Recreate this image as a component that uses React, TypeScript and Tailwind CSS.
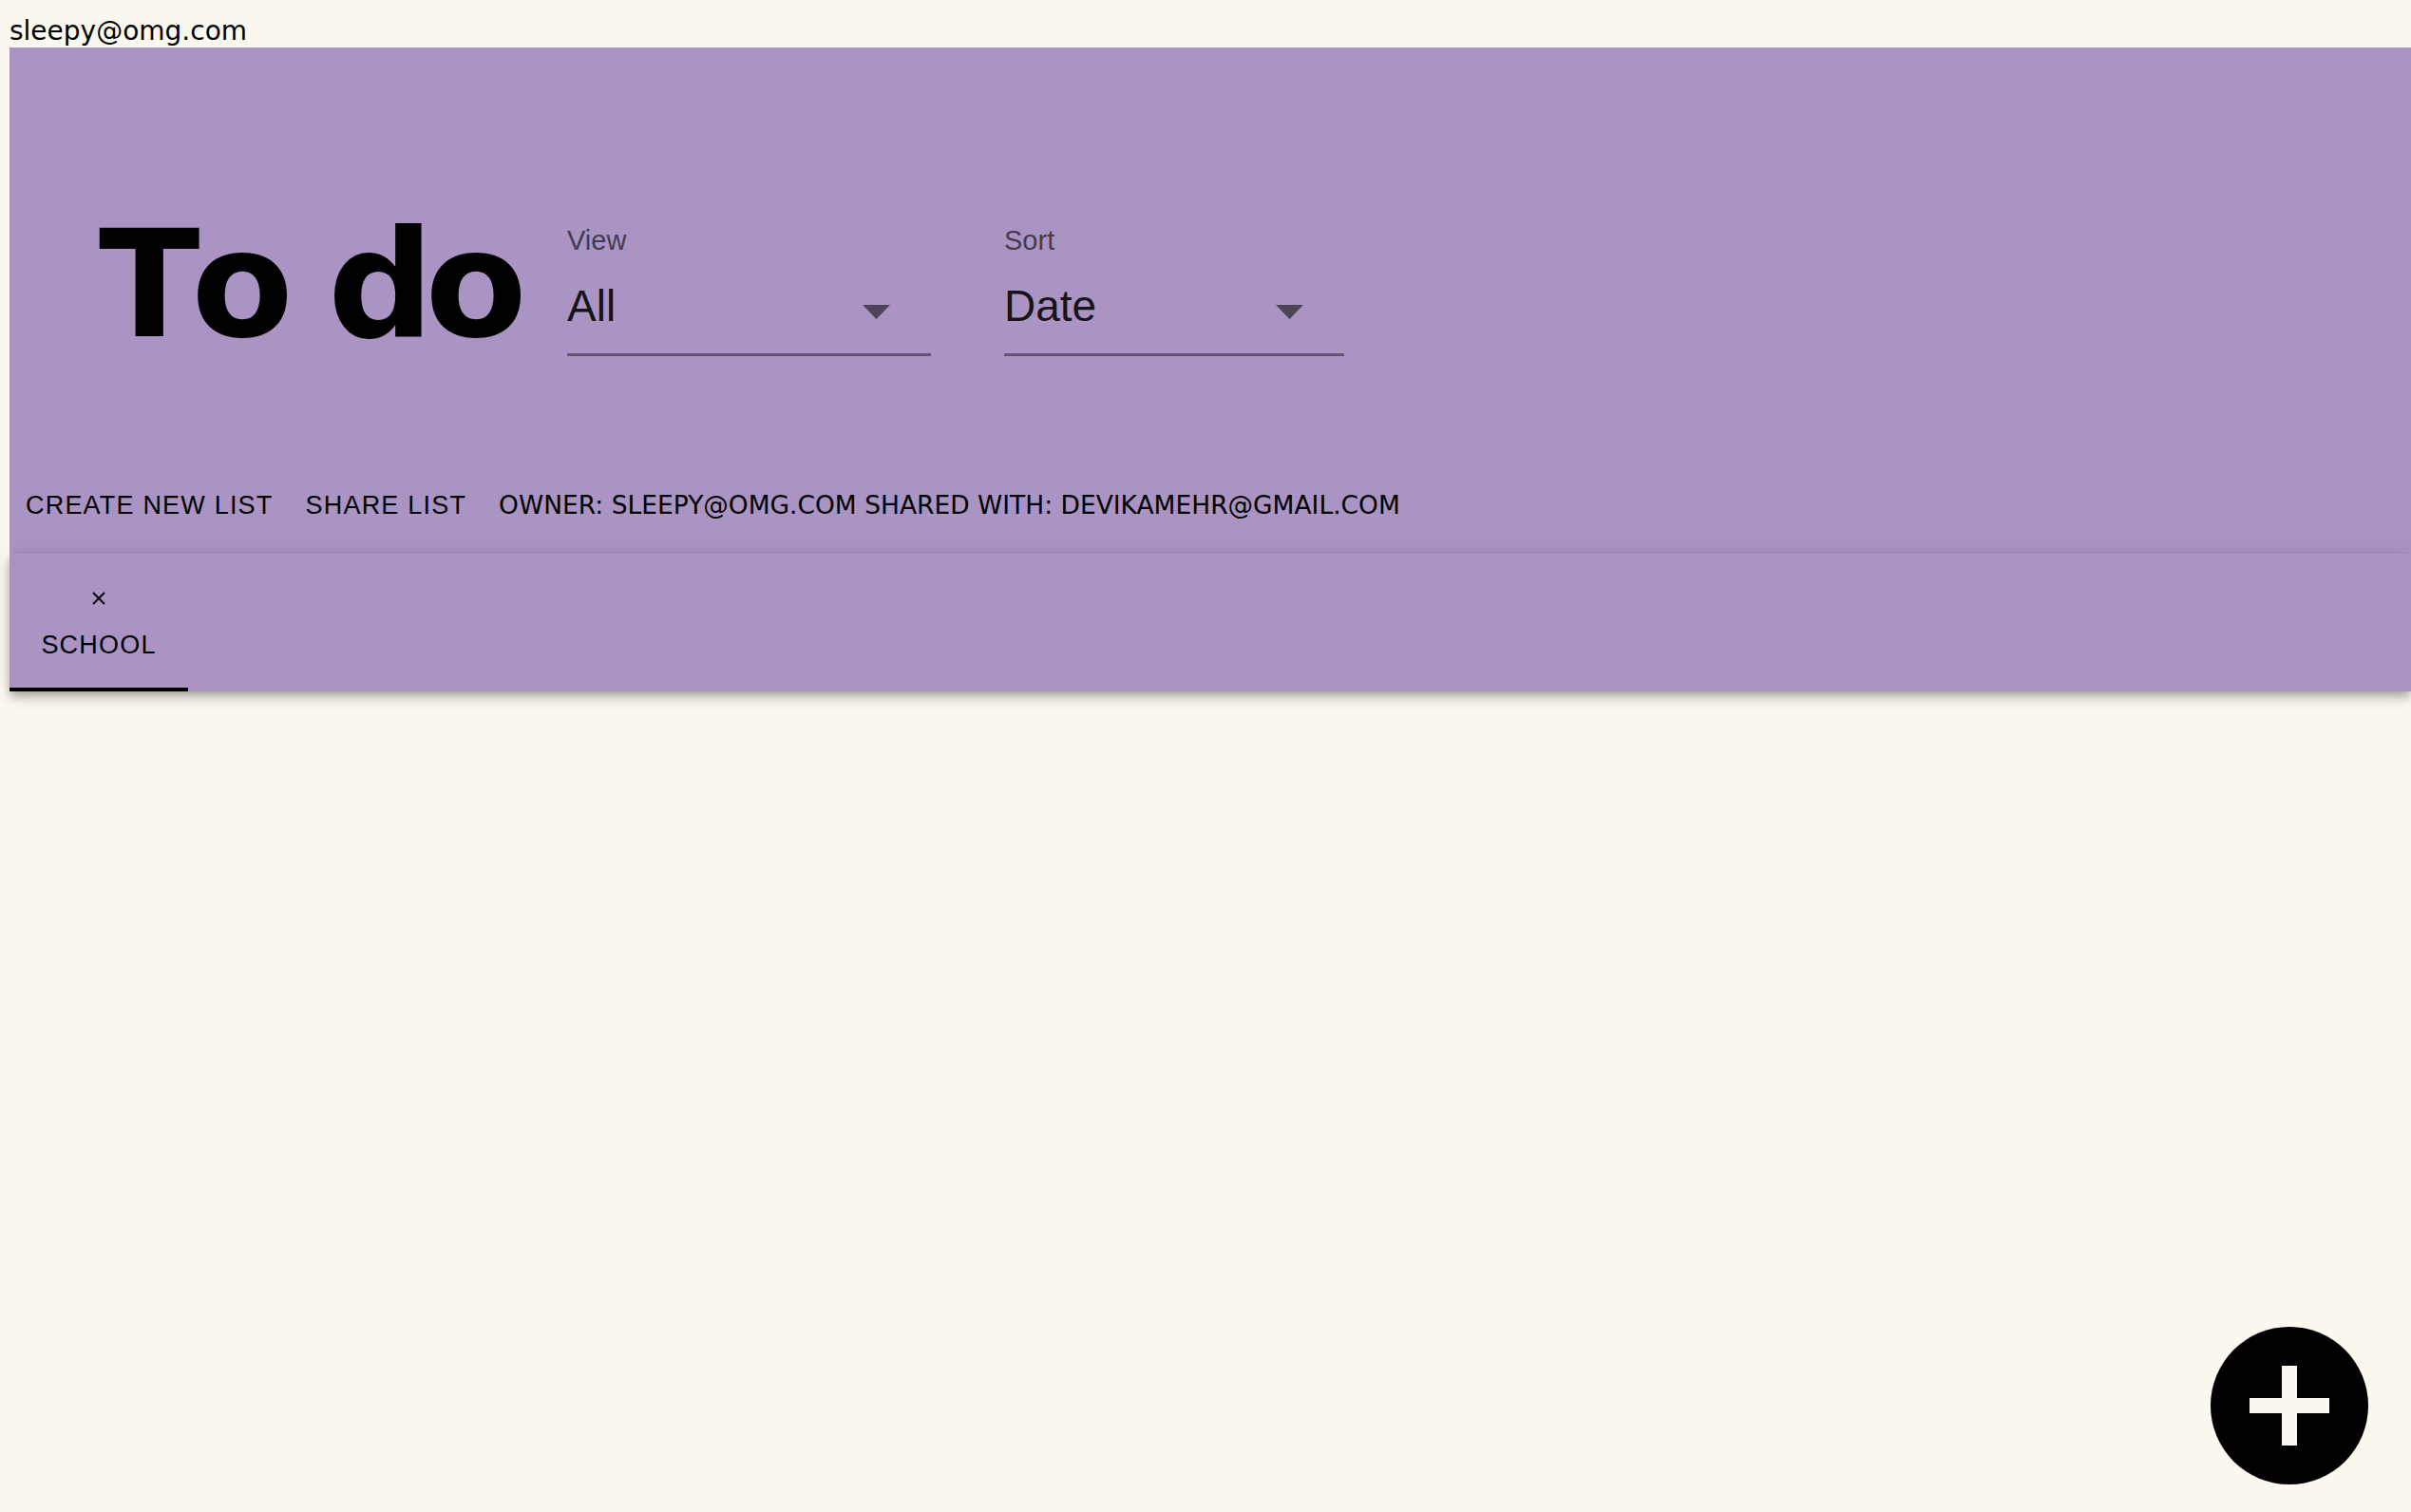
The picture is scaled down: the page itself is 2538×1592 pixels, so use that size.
import React from "react";

function Select({ label, value, width }: { label: string; value: string; width: string }) {
  return (
    <div className={`flex flex-col ${width}`}>
      <div className="mt-[17px] text-[29px] leading-[32px] text-[#443c4e] font-['Liberation_Sans',Arial,sans-serif]">{label}</div>
      <div className="mt-[27px] flex items-start justify-between border-b-[3px] border-[#635672] pb-[24px]">
        <span className="text-[46px] leading-[52px] text-[#161319] font-['Liberation_Sans',Arial,sans-serif]">{value}</span>
        <svg width="29" height="15" viewBox="0 0 29 15" className="mt-[25px] mr-[43px]">
          <polygon points="0,0 29,0 14.5,15" fill="#4e445a" />
        </svg>
      </div>
    </div>
  );
}

export default function App() {
  return (
    <div className="min-h-screen bg-[#fbf8f0] text-black">
      <div className="h-[50px] pl-[10px] pt-[15px] text-[28px] leading-[35px] font-['DejaVu_Sans',Verdana,sans-serif]">
        sleepy@omg.com
      </div>
      <div className="ml-[10px] bg-[#aa94c4]">
        <div className="flex h-[533px] flex-col justify-between">
          <div className="flex items-start pl-[94px] pt-[170px]">
            <h1 className="w-[493px] text-[156px] leading-[160px] font-bold tracking-[-9px] [font-kerning:none] font-['DejaVu_Sans',Verdana,sans-serif]">
              To do
            </h1>
            <Select label="View" value="All" width="w-[383px]" />
            <div className="w-[77px]" />
            <Select label="Sort" value="Date" width="w-[358px]" />
          </div>
          <div className="flex items-baseline pb-[35px]">
            <span className="px-[17px] text-[27px] leading-[32px] tracking-[1.2px] font-['Liberation_Sans',Arial,sans-serif]">
              CREATE NEW LIST
            </span>
            <span className="px-[17px] text-[27px] leading-[32px] tracking-[1.2px] font-['Liberation_Sans',Arial,sans-serif]">
              SHARE LIST
            </span>
            <span className="pl-[17px] text-[26.5px] leading-[32px] font-['DejaVu_Sans',Verdana,sans-serif]">
              OWNER: SLEEPY@OMG.COM SHARED WITH: DEVIKAMEHR@GMAIL.COM
            </span>
          </div>
        </div>
        <div className="relative z-10 flex h-[145px] bg-[#aa94c4] shadow-[0_4px_8px_-2px_rgba(0,0,0,0.2),0_8px_10px_0_rgba(0,0,0,0.14),0_2px_20px_0_rgba(0,0,0,0.12)]">
          <div className="flex w-[188px] flex-col items-center">
            <svg width="14" height="14" viewBox="0 0 14 14" className="mt-[40px]">
              <line x1="1" y1="1" x2="13" y2="13" stroke="#000" strokeWidth="1.8" />
              <line x1="13" y1="1" x2="1" y2="13" stroke="#000" strokeWidth="1.8" />
            </svg>
            <span className="mt-[26px] text-[27px] leading-[32px] tracking-[1.2px] font-['Liberation_Sans',Arial,sans-serif]">
              SCHOOL
            </span>
            <div className="mt-auto h-[4px] w-full bg-black" />
          </div>
        </div>
      </div>
      <button className="fixed bottom-[29px] right-[45px] flex h-[166px] w-[166px] items-center justify-center rounded-full bg-black">
        <svg width="84" height="84" viewBox="0 0 84 84">
          <rect x="34" y="0" width="16" height="84" fill="#fbf8f0" />
          <rect x="0" y="34" width="84" height="16" fill="#fbf8f0" />
        </svg>
      </button>
    </div>
  );
}
